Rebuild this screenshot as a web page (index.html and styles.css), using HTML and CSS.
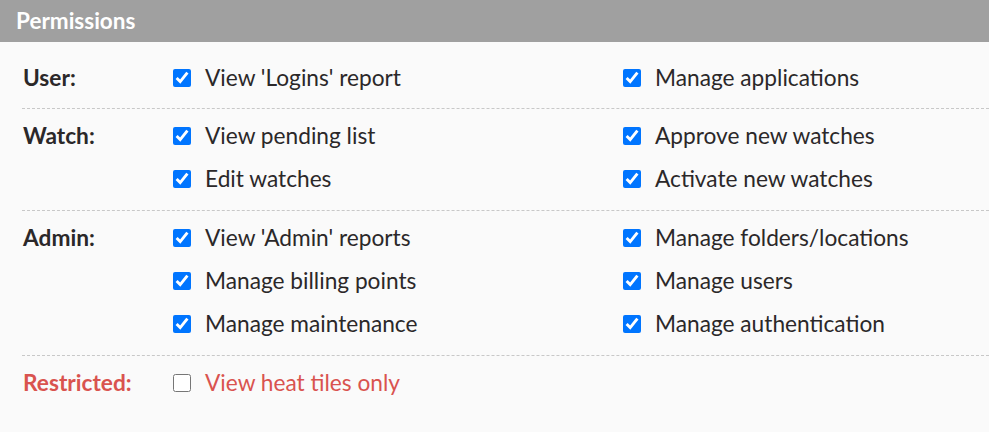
FILE: index.html
```html
<!DOCTYPE html>
<html lang="en">
<head>
    <meta charset="UTF-8">
    <title>Permissions</title>
    <link rel="stylesheet" href="styles.css">
</head>
<body>
    <div class="panel">
        <div class="panel-title">Permissions</div>

        <div class="perm-group">
            <div class="perm-label">User:</div>
            <label class="perm"><input type="checkbox" checked> View 'Logins' report</label>
            <label class="perm"><input type="checkbox" checked> Manage applications</label>
        </div>

        <div class="perm-group">
            <div class="perm-label">Watch:</div>
            <label class="perm"><input type="checkbox" checked> View pending list</label>
            <label class="perm"><input type="checkbox" checked> Approve new watches</label>
            <label class="perm col-1"><input type="checkbox" checked> Edit watches</label>
            <label class="perm"><input type="checkbox" checked> Activate new watches</label>
        </div>

        <div class="perm-group">
            <div class="perm-label">Admin:</div>
            <label class="perm"><input type="checkbox" checked> View 'Admin' reports</label>
            <label class="perm"><input type="checkbox" checked> Manage folders/locations</label>
            <label class="perm col-1"><input type="checkbox" checked> Manage billing points</label>
            <label class="perm"><input type="checkbox" checked> Manage users</label>
            <label class="perm col-1"><input type="checkbox" checked> Manage maintenance</label>
            <label class="perm"><input type="checkbox" checked> Manage authentication</label>
        </div>

        <div class="perm-group restricted">
            <div class="perm-label">Restricted:</div>
            <label class="perm"><input type="checkbox"> View heat tiles only</label>
        </div>
    </div>
</body>
</html>
```

FILE: styles.css
```css
body, html {
    margin: 0;
    padding: 0;
    background-color: #fafafa;
    font-family: Lato, "Open Sans", sans-serif;
    color: #2b2829;
}

.panel-title {
    height: 42px;
    line-height: 41px;
    background-color: #a0a0a0;
    color: white;
    font-size: 22.5px;
    font-weight: bold;
    padding-left: 16px;
    box-sizing: border-box;
}

.panel {
    padding-bottom: 10px;
}

.perm-group {
    display: grid;
    grid-template-columns: 150px 450px 1fr;
    grid-auto-rows: 43px;
    align-items: center;
    margin-left: 22px;
    padding: 5px 0 10px 1px;
    border-top: 1px dashed #c8c8c8;
}

.panel-title + .perm-group {
    border-top: none;
    padding-top: 14px;
    padding-bottom: 9px;
}

.perm-label {
    font-size: 22.7px;
    font-weight: bold;
}

.perm {
    display: flex;
    align-items: center;
    gap: 14px;
    font-size: 22.7px;
}

.perm.col-1 {
    grid-column: 2;
}

.perm input {
    width: 18px;
    height: 18px;
    margin: 0;
    accent-color: #0075ff;
}

.restricted .perm-label,
.restricted .perm {
    color: #d9534f;
}
```
